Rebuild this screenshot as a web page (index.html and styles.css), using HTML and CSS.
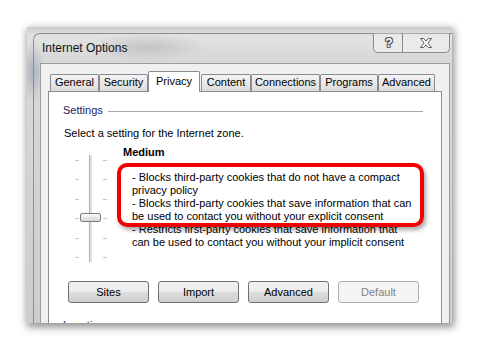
FILE: index.html
```html
<!DOCTYPE html>
<html>
<head>
<meta charset="utf-8">
<title>Internet Options</title>
<link rel="stylesheet" href="styles.css">
</head>
<body>
<div class="window">
  <div class="titlebar">
    <span class="title">Internet Options</span>
    <div class="caption">
      <span class="cap help">?</span>
      <span class="cap close"><svg width="14" height="10" viewBox="0 0 14 10"><path d="M1.5 .5h3.2l2.3 2.6 2.3-2.6h3.2L8.9 5l3.6 4.5H9.3L7 6.9 4.7 9.5H1.5L5.1 5z" fill="#fff" stroke="#5a5a5a" stroke-width="1" stroke-linejoin="round"/></svg></span>
    </div>
  </div>
  <div class="client">
    <div class="tabs">
      <span class="tab t-general">General</span>
      <span class="tab t-security">Security</span>
      <span class="tab t-privacy selected">Privacy</span>
      <span class="tab t-content">Content</span>
      <span class="tab t-connections">Connections</span>
      <span class="tab t-programs">Programs</span>
      <span class="tab t-advanced">Advanced</span>
    </div>
    <div class="panel">
      <div class="group-head"><span>Settings</span><i class="rule"></i></div>
      <p class="intro">Select a setting for the Internet zone.</p>
      <div class="zone">
        <div class="slider">
          <div class="ticks"><i></i><i></i><i></i><i></i><i></i><i></i></div>
          <div class="track"></div>
          <div class="ticks right"><i></i><i></i><i></i><i></i><i></i><i></i></div>
          <div class="thumb"></div>
        </div>
        <div class="desc">
          <div class="level">Medium</div>
          <div class="lines">
            <div>- Blocks third-party cookies that do not have a compact</div>
            <div>privacy policy</div>
            <div>- Blocks third-party cookies that save information that can</div>
            <div>be used to contact you without your explicit consent</div>
            <div>- Restricts first-party cookies that save information that</div>
            <div>can be used to contact you without your implicit consent</div>
          </div>
        </div>
      </div>
      <div class="buttons">
        <span class="btn">Sites</span>
        <span class="btn">Import</span>
        <span class="btn">Advanced</span>
        <span class="btn disabled">Default</span>
      </div>
      <div class="group-head location"><span>Location</span></div>
    </div>
  </div>
  <div class="callout"></div>
</div>
</body>
</html>
```
FILE: styles.css
```css
* { box-sizing: border-box; }
html, body { margin: 0; padding: 0; background: #fff; }
body {
  width: 479px;
  height: 349px;
  overflow: hidden;
  font-family: "Liberation Sans", Arial, sans-serif;
  font-size: 11px;
  color: #000;
}
.window {
  position: relative;
  margin: 27px 0 0 27px;
  width: 425px;
  height: 296px;
  overflow: hidden;
  background:
    radial-gradient(ellipse 60px 14px at 120px 20px, rgba(120,120,120,.25), rgba(120,120,120,0)),
    radial-gradient(ellipse 12px 30px at 6px 45px, rgba(90,110,140,.35), rgba(90,110,140,0)),
    linear-gradient(to bottom, #cdcdcd 0, #e2e2e2 9px, #d9d9d9 30px, #cdcdcd 100%);
  box-shadow: 1px 3px 8px 1px rgba(0,0,0,.45);
}
.window::before {
  content: "";
  position: absolute;
  left: 6px;
  top: 6px;
  right: -4px;
  bottom: -6px;
  border-top: 1px solid #8e8e8e;
  border-left: 1px solid #8e8e8e;
  border-radius: 7px 0 0 0;
  pointer-events: none;
}
.titlebar {
  display: flex;
  height: 36px;
  padding-left: 15px;
}
.title {
  padding-top: 14px;
  font-size: 12px;
  line-height: 14px;
  color: #111;
}
.caption {
  display: flex;
  margin: 6px 2px 0 auto;
  height: 20px;
  border: 1px solid #8a8a8a;
  border-top: 0;
  border-radius: 0 0 5px 5px;
  background: linear-gradient(to bottom, rgba(255,255,255,.25), rgba(255,255,255,.45));
  position: relative;
  z-index: 1;
}
.cap {
  display: flex;
  align-items: center;
  justify-content: center;
  height: 19px;
}
.help {
  width: 28px;
  font-weight: bold;
  font-size: 12px;
  color: #fff;
  text-shadow: 1px 0 #5a5a5a, -1px 0 #5a5a5a, 0 1px #5a5a5a, 0 -1px #5a5a5a, 1px 1px #5a5a5a, -1px -1px #5a5a5a, 1px -1px #5a5a5a, -1px 1px #5a5a5a;
  padding-left: 2px;
}
.close {
  width: 47px;
  border-left: 1px solid #8a8a8a;
  padding-top: 1px;
}
.client {
  margin-left: 13px;
  width: 410px;
  height: 300px;
  background: #f0f0f0;
  border: 1px solid #9c9c9c;
  border-bottom: 0;
}
.tabs {
  display: flex;
  align-items: flex-end;
  margin: 7px 0 0 9px;
  height: 20px;
}
.tab {
  height: 17px;
  border: 1px solid #898c95;
  border-bottom: 0;
  border-radius: 2px 2px 0 0;
  background: linear-gradient(to bottom, #f4f4f4, #e6e6e6 60%, #dcdcdc);
  text-align: center;
  line-height: 15px;
  white-space: nowrap;
}
.tab.selected {
  height: 21px;
  margin-bottom: -1px;
  background: #fff;
  position: relative;
  z-index: 1;
  line-height: 13px;
  padding-top: 3px;
}
.t-general { width: 49px; }
.t-security { width: 49px; }
.t-privacy { width: 52px; }
.t-content { width: 50px; margin-left: 1px; }
.t-connections { width: 69px; }
.t-programs { width: 58px; }
.t-advanced { width: 57px; }
.panel {
  position: relative;
  margin-left: 7px;
  width: 394px;
  height: 280px;
  background: #fff;
  border: 1px solid #898c95;
  padding: 12px 0 0 14px;
}
.group-head {
  display: flex;
  align-items: center;
  line-height: 13px;
  color: #1c2260;
}
.rule {
  flex: 1;
  height: 1px;
  margin: 1px 18px 0 5px;
  background: #a8a8a8;
}
.intro {
  margin: 10px 0 0 1px;
  line-height: 13px;
}
.zone {
  display: flex;
  align-items: flex-start;
  margin-top: 6px;
  padding-left: 12px;
}
.slider {
  position: relative;
  display: flex;
  margin-top: 9px;
  width: 32px;
  height: 107px;
}
.ticks {
  display: flex;
  flex-direction: column;
  justify-content: space-between;
  width: 4px;
  padding: 5px 0 4px;
}
.ticks i {
  display: block;
  height: 1px;
  background: #c6c6c6;
}
.ticks.right { margin-left: 11px; }
.track {
  margin-left: 10px;
  width: 3px;
  height: 107px;
  border-left: 1px solid #b0b0b0;
  background: #e2e2e2;
}
.thumb {
  position: absolute;
  left: 5px;
  top: 58px;
  width: 21px;
  height: 9px;
  border: 1px solid #7a7a7a;
  border-radius: 2px;
  background: linear-gradient(to bottom, #fbfbfb, #e8e8e8 50%, #d6d6d6);
}
.desc {
  margin-left: 16px;
}
.level {
  font-weight: bold;
  line-height: 13px;
}
.lines {
  margin-top: 12px;
  padding-left: 9px;
  line-height: 13px;
  white-space: nowrap;
}
.buttons {
  display: flex;
  gap: 9px;
  margin: 19px 0 0 5px;
}
.btn {
  width: 81px;
  height: 22px;
  border: 1px solid #707070;
  border-radius: 3px;
  background: linear-gradient(to bottom, #f2f2f2 0, #ebebeb 50%, #dddddd 51%, #cfcfcf 100%);
  display: flex;
  align-items: center;
  justify-content: center;
}
.btn.disabled {
  border-color: #adb2b5;
  background: #f4f4f4;
  color: #838383;
}
.location {
  margin-top: 16px;
}
.callout {
  position: absolute;
  left: 90px;
  top: 136px;
  width: 307px;
  height: 64px;
  border: 4px solid #f00000;
  border-radius: 10px;
  box-shadow: 2px 3px 4px rgba(0,0,0,.35);
  z-index: 5;
}
```
